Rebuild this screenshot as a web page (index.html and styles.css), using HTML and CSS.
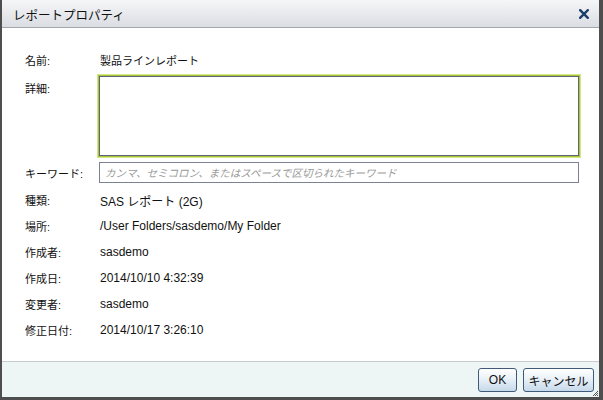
FILE: index.html
```html
<!DOCTYPE html>
<html lang="ja">
<head>
    <meta charset="UTF-8">
    <title>レポートプロパティ</title>
    <link rel="stylesheet" href="styles.css">
</head>
<body>
    <div class="dialog">
        <div class="dialog-header">
            <span class="dialog-title">レポートプロパティ</span>
            <button class="close-btn" title="閉じる">
                <svg width="10" height="10" viewBox="0 0 10 10">
                    <path d="M1.2 1.2 L8.8 8.8 M8.8 1.2 L1.2 8.8" stroke="#1d3e6c" stroke-width="2.4" stroke-linecap="square"/>
                </svg>
            </button>
        </div>
        <div class="dialog-body">
            <div class="prop-row">
                <span class="prop-label">名前:</span>
                <span class="prop-value value-ja">製品ラインレポート</span>
            </div>
            <div class="prop-row prop-row-area">
                <span class="prop-label">詳細:</span>
                <textarea class="desc-input"></textarea>
            </div>
            <div class="prop-row prop-row-input">
                <span class="prop-label">キーワード:</span>
                <input class="keyword-input" type="text" placeholder="カンマ、セミコロン、またはスペースで区切られたキーワード">
            </div>
            <div class="prop-row">
                <span class="prop-label">種類:</span>
                <span class="prop-value">SAS レポート (2G)</span>
            </div>
            <div class="prop-row">
                <span class="prop-label">場所:</span>
                <span class="prop-value">/User Folders/sasdemo/My Folder</span>
            </div>
            <div class="prop-row">
                <span class="prop-label">作成者:</span>
                <span class="prop-value">sasdemo</span>
            </div>
            <div class="prop-row">
                <span class="prop-label">作成日:</span>
                <span class="prop-value">2014/10/10 4:32:39</span>
            </div>
            <div class="prop-row">
                <span class="prop-label">変更者:</span>
                <span class="prop-value">sasdemo</span>
            </div>
            <div class="prop-row">
                <span class="prop-label">修正日付:</span>
                <span class="prop-value">2014/10/17 3:26:10</span>
            </div>
        </div>
        <div class="dialog-footer">
            <button class="btn btn-ok">OK</button>
            <button class="btn btn-cancel">キャンセル</button>
            <svg class="resize-grip" width="7" height="7" viewBox="0 0 7 7">
                <path d="M6 1 L1 6 M6 3 L3 6 M6 5 L5 6" stroke="#555" stroke-width="1"/>
            </svg>
        </div>
    </div>
</body>
</html>
```

FILE: styles.css
```css
body {
    margin: 0;
    background-color: #4e4e4e;
    font-family: "Liberation Sans", "Noto Sans CJK JP", sans-serif;
    font-size: 12px;
    color: #111;
}
.dialog {
    width: 597px;
    height: 397px;
    margin-left: 2px;
    background: #fff;
    display: flex;
    flex-direction: column;
}
.dialog-header {
    height: 28px;
    box-sizing: border-box;
    display: flex;
    align-items: center;
    justify-content: space-between;
    padding: 0 9px 0 11px;
    background: linear-gradient(#f5f6f8, #dadde2);
    border-bottom: 1px solid #a2a6ab;
}
.dialog-title {
    font-size: 12.5px;
    color: #111;
    padding-top: 1px;
}
.close-btn {
    border: none;
    background: none;
    padding: 0;
    width: 12px;
    height: 12px;
    display: flex;
    align-items: center;
    justify-content: center;
    cursor: pointer;
}
.dialog-body {
    flex: 1;
    padding: 19px 20px 0 23px;
}
.prop-row {
    display: grid;
    grid-template-columns: 74px 480px;
    align-items: center;
    height: 26px;
}
.prop-label {
    font-size: 11px;
}
.prop-value {
    padding-left: 1px;
    color: #111;
}
.value-ja {
    font-size: 11px;
}
.prop-row-area {
    height: auto;
    align-items: start;
    margin-top: 3px;
}
.prop-row-area .prop-label {
    padding-top: 4px;
}
.desc-input {
    display: block;
    width: 480px;
    height: 80px;
    box-sizing: border-box;
    margin: 0;
    border: 1px solid #5c6676;
    box-shadow: 0 0 0 1px #a9c43a, 0 0 0 2px #d3e68a;
    resize: none;
    outline: none;
    font: inherit;
}
.prop-row-input {
    height: auto;
    margin: 6px 0 4px;
}
.keyword-input {
    display: block;
    width: 480px;
    height: 21px;
    box-sizing: border-box;
    margin: 0;
    padding: 0 5px;
    border: 1px solid #7b8292;
    outline: none;
    font: inherit;
    font-size: 10.5px;
}
.keyword-input::placeholder {
    color: #9a9a9a;
    font-style: italic;
}
.dialog-footer {
    position: relative;
    height: 36px;
    box-sizing: border-box;
    border-top: 1px solid #c9cccc;
    background: #eef5f5;
    display: flex;
    justify-content: flex-end;
    align-items: flex-start;
    gap: 6px;
    padding: 6px 5px 0 0;
}
.btn {
    height: 24px;
    box-sizing: border-box;
    border: 1px solid #3f5b78;
    border-radius: 3px;
    background: linear-gradient(#ffffff, #e9f1f8 45%, #c6d9ea);
    font-family: "Liberation Sans", "Noto Sans CJK JP", sans-serif;
    font-size: 12px;
    color: #111;
    padding: 0;
    cursor: pointer;
}
.btn-ok {
    width: 39px;
}
.btn-cancel {
    width: 71px;
}
.resize-grip {
    position: absolute;
    right: 0;
    bottom: 0;
}
```
